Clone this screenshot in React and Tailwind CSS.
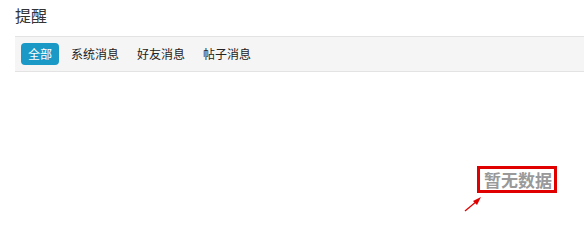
const tabs = ["系统消息", "好友消息", "帖子消息"];

export default function App() {
  return (
    <div
      className="relative h-[216px] w-full overflow-hidden bg-white text-[#333]"
      style={{ fontFamily: '"Microsoft YaHei", "Noto Sans CJK SC", sans-serif' }}
    >
      <div className="px-[15px] pt-[4px] text-[16px] leading-[22px] text-[#333]">提醒</div>
      <div className="ml-[15px] mt-[10px] flex h-[36px] items-center border-y border-[#e3e3e3] bg-[#f5f5f5] pl-[6px]">
        <span className="rounded-[4px] bg-[#1a98c6] px-[7px] text-[12px] leading-[22px] text-white">全部</span>
        <div className="ml-[3px] flex">
          {tabs.map((t) => (
            <span key={t} className="px-[9px] text-[12px] leading-[22px] text-[#222]">
              {t}
            </span>
          ))}
        </div>
      </div>
      <div className="mt-[94px] flex justify-end pr-[27px]">
        <div className="border-[3px] border-[#e00000] pl-[4px] pr-[2px] text-[17px] font-bold leading-[21px] text-[#999]">
          暂无数据
        </div>
      </div>
      <svg className="absolute left-[462px] top-[194px]" width="24" height="22" viewBox="0 0 24 22">
        <line x1="3" y1="17" x2="15" y2="7" stroke="#e00000" strokeWidth="1.3" />
        <polygon points="19,3 11,7 15,11" fill="#e00000" />
      </svg>
    </div>
  );
}
